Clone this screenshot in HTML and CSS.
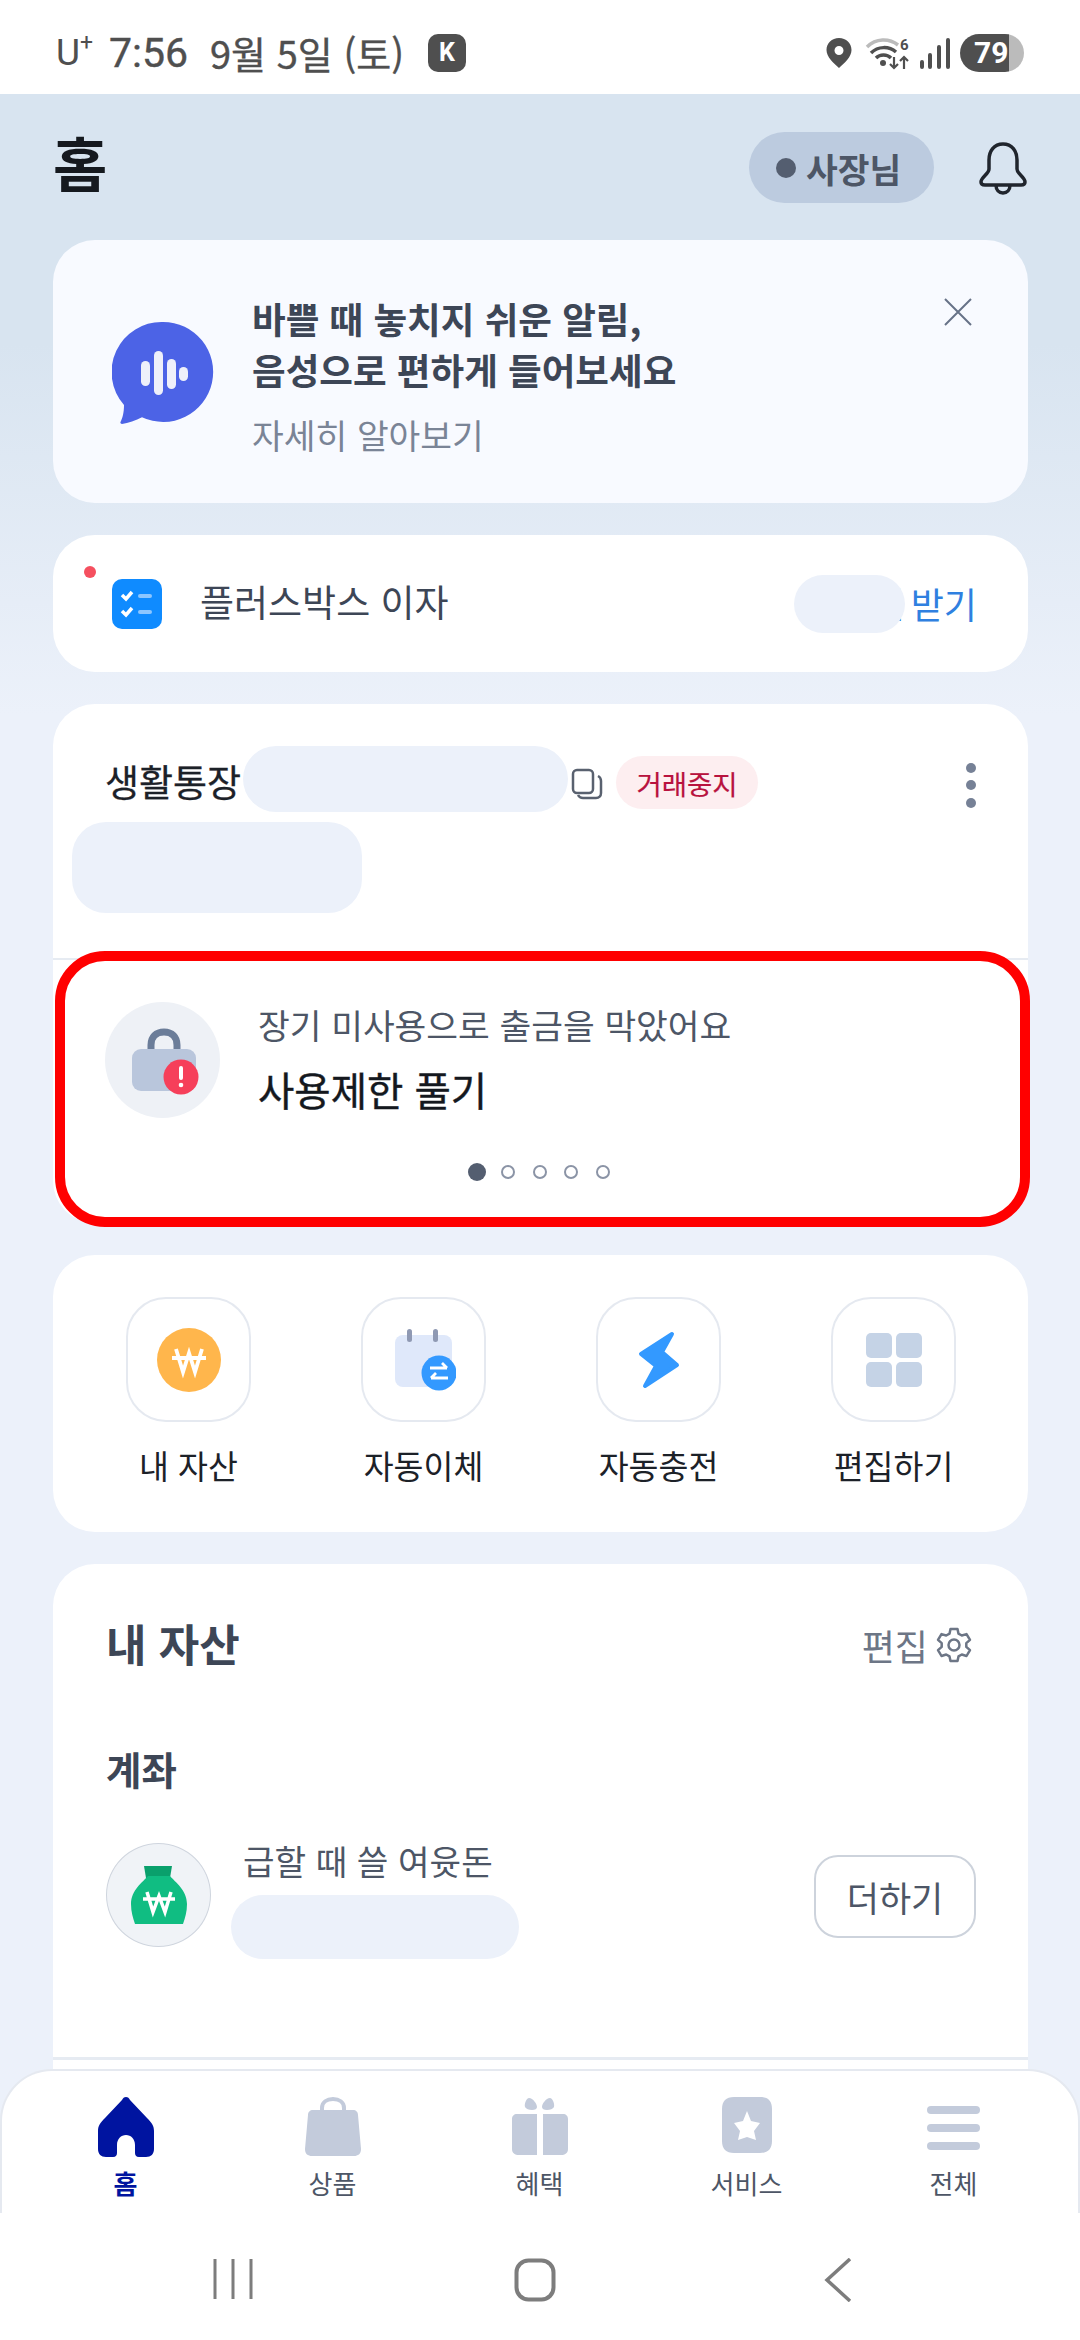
FILE: index.html
```html
<!DOCTYPE html>
<html lang="ko">
<head>
<meta charset="utf-8">
<title>홈</title>
<link rel="stylesheet" href="styles.css">
</head>
<body>
<div class="screen">
  <div class="status">
    <div class="status-left">
      <span class="carrier">U<sup>+</sup></span>
      <span class="clock">7:56</span>
      <span class="date">9월 5일 (토)</span>
      <span class="k-badge">K</span>
    </div>
    <div class="status-right">
      <svg class="i-pin" width="28" height="32" viewBox="0 0 28 32"><path fill-rule="evenodd" fill="#4f4f4f" d="M14 1C6.8 1 1.5 6.4 1.500 13c0 7 7 13 12.500 18 5.500-5 12.500-11 12.500-18C26.500 6.400 21.200 1 14 1zm0 8a4.500 4.500 0 1 1 0 9 4.500 4.500 0 0 1 0-9z"/></svg>
      <svg class="i-wifi" width="48" height="34" viewBox="0 0 48 34">
        <path d="M2 11C11 2 24 2 33 9" fill="none" stroke="#bbb" stroke-width="3.500"/>
        <path d="M6 17C13 10 24 10 31 16" fill="none" stroke="#4f4f4f" stroke-width="3.500"/>
        <path d="M11 22C15 18 22 18 26 22" fill="none" stroke="#4f4f4f" stroke-width="3.500"/>
        <circle cx="18" cy="27" r="3" fill="#4f4f4f"/>
        <path d="M29 21v11M25 28l4 4 4-4M39 33V21M35 25l4-4 4 4" fill="none" stroke="#4f4f4f" stroke-width="2.200"/>
        <text x="35" y="14" class="wifi-six">6</text>
      </svg>
      <svg class="i-signal" width="32" height="34" viewBox="0 0 32 34"><g stroke="#4f4f4f" stroke-width="4" stroke-linecap="round"><path d="M3 31v-5M11 31V19M20 31V11M29 31V4"/></g></svg>
      <span class="battery">79</span>
    </div>
  </div>

  <div class="main">
    <header class="top">
      <h1 class="page-title">홈</h1>
      <div class="top-right">
        <div class="role-chip"><span class="role-dot"></span>사장님</div>
        <svg class="i-bell" width="50" height="54" viewBox="0 0 50 54"><path d="M25 3c-9 0-14 7-14 16v9c0 5-8 8-8 13 0 2 1 3 4 3h36c3 0 4-1 4-3 0-5-8-8-8-13v-9c0-9-5-16-14-16z" fill="none" stroke="#20252d" stroke-width="3.500"/><path d="M18 44c0 5 3 8 7 8s7-3 7-8" fill="none" stroke="#20252d" stroke-width="3.500"/></svg>
      </div>
    </header>

    <section class="card banner">
      <svg class="i-bubble" width="102" height="104" viewBox="0 0 102 104">
        <path fill="#4c63e6" d="M51 1a50 50 0 1 1-21 95.300C24 99.500 16 102 10 103c-1 0-2-1-1.500-2 2-4 3.500-9 3.500-17A50 50 0 0 1 51 1z"/>
        <g fill="#eef0fa"><rect x="29" y="40" width="9" height="25" rx="4.500"/><rect x="42" y="30" width="9" height="44" rx="4.500"/><rect x="55" y="38" width="9" height="30" rx="4.500"/><rect x="67" y="46" width="9" height="14" rx="4.500"/></g>
      </svg>
      <div class="banner-text">
        <p class="banner-title">바쁠 때 놓치지 쉬운 알림,<br>음성으로 편하게 들어보세요</p>
        <p class="banner-link">자세히 알아보기</p>
      </div>
      <svg class="i-close" width="30" height="30" viewBox="0 0 30 30"><path d="M2 2l26 26M28 2L2 28" stroke="#677287" stroke-width="2" fill="none"/></svg>
    </section>

    <section class="card plus-row">
      <span class="notice-dot"></span>
      <svg class="i-check" width="50" height="50" viewBox="0 0 50 50"><rect width="50" height="50" rx="10" fill="#0f8bff"/><path d="M10 16l4 4 6-7M10 32l4 4 6-7" fill="none" stroke="#fff" stroke-width="3.500"/><rect x="26" y="15" width="14" height="4" rx="2" fill="#8cc6ff"/><rect x="26" y="31" width="14" height="4" rx="2" fill="#8cc6ff"/></svg>
      <span class="plus-label">플러스박스 이자</span>
      <span class="plus-action">원 받기</span>
      <span class="mask mask-plus"></span>
    </section>

    <section class="card account">
      <div class="account-body">
        <div class="account-line">
          <span class="account-name">생활통장</span>
          <span class="mask mask-number"></span>
          <svg class="i-copy" width="32" height="32" viewBox="0 0 32 32"><rect x="2" y="2" width="20" height="23" rx="4" fill="none" stroke="#59616f" stroke-width="2.500"/><path d="M27 8c2 1 3 3 3 5v12c0 3-2 5-5 5H12c-2 0-4-1-5-3" fill="none" stroke="#59616f" stroke-width="2.500"/></svg>
          <span class="badge">거래중지</span>
          <span class="more"><i></i><i></i><i></i></span>
        </div>
        <div class="mask mask-balance"></div>
      </div>
      <div class="notice">
        <div class="notice-main">
          <span class="lock-wrap">
            <svg width="72" height="68" viewBox="0 0 72 68"><path d="M19 24V17C19 9 24 4 32 4s13 5 13 13v7" fill="none" stroke="#6b7d99" stroke-width="7"/><rect x="0" y="21" width="64" height="42" rx="9" fill="#b9c6dc"/><circle cx="49" cy="49" r="17.500" fill="#f63f5a"/><rect x="47" y="38" width="4" height="14" rx="2" fill="#fff"/><circle cx="49" cy="57" r="2.300" fill="#fff"/></svg>
          </span>
          <div class="notice-text">
            <p class="notice-desc">장기 미사용으로 출금을 막았어요</p>
            <p class="notice-title">사용제한 풀기</p>
          </div>
        </div>
        <div class="pager"><i class="on"></i><i></i><i></i><i></i><i></i></div>
      </div>
      <div class="highlight"></div>
    </section>

    <section class="card quick">
      <div class="quick-item">
        <span class="quick-box"><svg width="64" height="64" viewBox="0 0 64 64"><circle cx="32" cy="32" r="32" fill="#ffb64c"/><path d="M19 21l7 23 6-19 6 19 7-23M15 30h34" fill="none" stroke="#fff" stroke-width="3.800"/></svg></span>
        <span class="quick-label">내 자산</span>
      </div>
      <div class="quick-item">
        <span class="quick-box"><svg width="64" height="64" viewBox="0 0 64 64"><rect x="3" y="7" width="57" height="52" rx="8" fill="#dfe8fa"/><rect x="15" y="1" width="5" height="13" rx="2.500" fill="#8f99b3"/><rect x="41" y="1" width="5" height="13" rx="2.500" fill="#8f99b3"/><circle cx="47" cy="45" r="17.500" fill="#3399ff"/><path d="M38 40h17M50 35l5 5M56 50H39M44 45l-5 5" fill="none" stroke="#fff" stroke-width="2.800"/></svg></span>
        <span class="quick-label">자동이체</span>
      </div>
      <div class="quick-item">
        <span class="quick-box"><svg width="44" height="60" viewBox="0 0 44 60"><path d="M35 4L4 24l15 12-11 20 32-21-15-13z" fill="#3399ff" stroke="#3399ff" stroke-width="4" stroke-linejoin="round"/></svg></span>
        <span class="quick-label">자동충전</span>
      </div>
      <div class="quick-item">
        <span class="quick-box"><span class="grid-icon"><i></i><i></i><i></i><i></i></span></span>
        <span class="quick-label">편집하기</span>
      </div>
    </section>

    <section class="card assets">
      <div class="assets-head">
        <h2 class="assets-title">내 자산</h2>
        <div class="assets-edit">편집
          <svg width="36" height="36" viewBox="0 0 36 36"><g fill="none" stroke="#6d7686" stroke-width="2.500" stroke-linejoin="round"><path d="M14.500 2.500h7l1 4.800 3.300 1.900 4.700-1.500 3.500 6-3.700 3.300v3.800l3.700 3.300-3.500 6-4.700-1.500-3.300 1.900-1 4.800h-7l-1-4.800-3.300-1.900-4.700 1.500-3.500-6 3.700-3.300v-3.800L2 13.700l3.500-6 4.700 1.500 3.300-1.900z" transform="translate(0 -.5) scale(1 .98)"/><circle cx="18" cy="18" r="5.500"/></g></svg>
        </div>
      </div>
      <h3 class="assets-sub">계좌</h3>
      <div class="asset-row">
        <span class="bag-wrap"><svg width="56" height="58" viewBox="0 0 56 58"><path d="M13 0h28l-2 12H15z" fill="#0aa06c"/><path d="M17 10h22C44 16 56 24 56 38c0 8-2 14-4 20H4C2 52 0 46 0 38 0 24 12 16 17 10z" fill="#10bd82"/><path d="M16 26l6 20 6-16 6 16 6-20M12 33h32" fill="none" stroke="#fff" stroke-width="3.500"/></svg></span>
        <div class="asset-info">
          <span class="asset-name">급할 때 쓸 여윳돈</span>
          <span class="mask mask-amount"></span>
        </div>
        <span class="add-btn">더하기</span>
      </div>
      <div class="asset-divider"></div>
    </section>
  </div>

  <div class="bottom">
    <nav class="tabs">
      <div class="tab active">
        <svg width="56" height="60" viewBox="0 0 56 60"><path fill="#0014a0" d="M28 0c2 0 3 1 4 3l17 18c5 5 7 8 7 13v18c0 5-3 8-8 8h-7c-3 0-4-2-4-4v-8c0-6-4-10-9-10s-9 4-9 10v8c0 2-1 4-4 4H8c-5 0-8-3-8-8V34c0-5 2-8 7-13L24 3c1-2 2-3 4-3z"/></svg>
        <span>홈</span>
      </div>
      <div class="tab">
        <svg width="56" height="60" viewBox="0 0 56 60"><path d="M17 14V11C17 5 22 2 28 2s11 3 11 9v3" fill="none" stroke="#c3cbdb" stroke-width="4"/><path fill="#c3cbdb" d="M8 13h40c3 0 5 2 5 5l3 34c0 5-3 7-7 7H7c-4 0-7-2-7-7l3-34c0-3 2-5 5-5z"/></svg>
        <span>상품</span>
      </div>
      <div class="tab">
        <svg width="56" height="60" viewBox="0 0 56 60"><g fill="#c3cbdb"><path d="M17 1c4 0 8 6 8 9 0 2-2 3-5 3s-6-1-7-3c-1-4 2-9 4-9zM38 1c-4 0-8 6-8 9 0 2 2 3 5 3s6-1 7-3c1-4-2-9-4-9z"/><path d="M5 17h20v41H7c-4 0-7-2-7-6V22c0-3 2-5 5-5zM31 17h20c3 0 5 2 5 5v30c0 4-3 6-7 6H31z"/></g></svg>
        <span>혜택</span>
      </div>
      <div class="tab">
        <svg width="50" height="56" viewBox="0 0 50 56"><path fill-rule="evenodd" fill="#c3cbdb" d="M12 0h26c8 0 12 4 12 12v32c0 8-4 12-12 12H12C4 56 0 52 0 44V12C0 4 4 0 12 0zm13 14l-4 10-9 2 6 8-2 9 9-3 9 3-2-9 6-8-9-2z"/></svg>
        <span>서비스</span>
      </div>
      <div class="tab">
        <span class="burger"><i></i><i></i><i></i></span>
        <span>전체</span>
      </div>
    </nav>
    <div class="sysnav">
      <svg width="40" height="42" viewBox="0 0 40 42"><path d="M2 1v40M20 1v40M38 1v40" stroke="#7d7d7d" stroke-width="3"/></svg>
      <svg width="42" height="44" viewBox="0 0 42 44"><rect x="2.500" y="2.500" width="37" height="39" rx="12" fill="none" stroke="#7d7d7d" stroke-width="4"/></svg>
      <svg width="28" height="44" viewBox="0 0 28 44"><path d="M26 1L3 22l23 21" fill="none" stroke="#7d7d7d" stroke-width="3.500"/></svg>
    </div>
  </div>
</div>
</body>
</html>
```

FILE: styles.css
```css
* { box-sizing: border-box; }
html, body { margin: 0; padding: 0; }
body { font-family: "Noto Sans CJK KR", "Noto Sans", sans-serif; }
p, h1, h2, h3 { margin: 0; }
i { display: block; }

.screen { position: relative; width: 1080px; height: 2340px; overflow: hidden; display: flex; flex-direction: column; background: #fff; }

/* status bar */
.status { height: 94px; flex: none; display: flex; justify-content: space-between; align-items: center; padding: 12px 56px 0 56px; color: #4f4f4f; background: #fff; }
.status-left { display: flex; align-items: center; font-family: "Roboto", "Noto Sans CJK KR", sans-serif; font-size: 37px; line-height: 40px; }
.carrier { width: 53px; font-weight: 400; }
.carrier sup { font-size: 23px; line-height: 0; vertical-align: 15px; }
.clock { width: 101px; font-weight: 400; font-size: 41px; -webkit-text-stroke: 0.4px #4f4f4f; }
.date { width: 218px; font-weight: 400; font-family: "Noto Sans CJK KR", sans-serif; font-size: 38px; white-space: nowrap; -webkit-text-stroke: 0.4px #4f4f4f; }
.k-badge { width: 38px; height: 38px; border-radius: 10px; background: #4f4f4f; color: #fff; font-size: 25px; font-weight: 700; display: flex; align-items: center; justify-content: center; }
.status-right { display: flex; align-items: center; }
.i-pin { margin-right: 12px; }
.i-wifi { margin-right: 6px; }
.i-signal { margin-right: 9px; }
.wifi-six { font: 700 15px "Roboto", sans-serif; fill: #4f4f4f; }
.battery { width: 64px; height: 38px; border-radius: 19px; background: linear-gradient(90deg, #4f4f4f 0, #4f4f4f 77%, #bbb 77%, #bbb 100%); color: #fff; font: 700 30px/38px "Roboto", sans-serif; padding-left: 14px; }

/* main */
.main { flex: 1; min-height: 0; overflow: hidden; padding: 0 52px 0 53px; display: flex; flex-direction: column; gap: 32px; background: linear-gradient(180deg, #d8e4f0 0, #d8e4f0 250px, #ecf1fa 620px, #ecf1fa 100%); }
.top { height: 115px; flex: none; margin-bottom: -1px; display: flex; justify-content: space-between; align-items: flex-start; padding-top: 38px; }
.page-title { font-size: 59px; line-height: 60px; font-weight: 700; color: #15191f; }
.top-right { display: flex; align-items: center; gap: 44px; }
.role-chip { width: 185px; height: 71px; border-radius: 36px; background: #bccbdf; display: flex; align-items: center; padding-left: 27px; gap: 10px; color: #4d5666; font-size: 34.500px; font-weight: 700; white-space: nowrap; }
.role-dot { width: 20px; height: 20px; border-radius: 50%; background: #545e70; flex: none; }

.card { background: #fff; border-radius: 42px; flex: none; position: relative; }

.banner { height: 263px; background: #f8faff; display: flex; align-items: flex-start; padding: 81px 0 0 59px; }
.banner-text { margin: -28px 0 0 38px; }
.banner-title { font-size: 36.600px; line-height: 51px; font-weight: 700; color: #3d4656; }
.banner-link { font-size: 34.500px; line-height: 46px; margin-top: 16px; color: #7a8496; }
.i-close { position: absolute; top: 57px; right: 55px; }

.plus-row { height: 137px; display: flex; align-items: center; padding: 0 51px 0 59px; }
.notice-dot { position: absolute; left: 31px; top: 31px; width: 12px; height: 12px; border-radius: 50%; background: #f5505f; }
.plus-label { font-size: 37px; color: #3d4656; margin: -5px 0 0 38px; flex: 1; }
.plus-action { font-size: 36px; color: #2f80e0; margin-top: -2px; word-spacing: -4px; }
.mask { background: #ecf1fa; display: block; flex: none; }
.mask-plus { position: absolute; left: 741px; top: 40px; width: 111px; height: 58px; border-radius: 29px; }

.account { height: 519px; }
.account-body { height: 256px; border-bottom: 2px solid #e6ebf2; padding: 42px 0 0 19px; }
.account-line { display: flex; align-items: center; height: 66px; }
.account-name { font-size: 37px; color: #1c2128; width: 171px; padding-left: 33px; flex: none; white-space: nowrap; margin-top: 4px; -webkit-text-stroke: 0.3px #1c2128; }
.mask-number { width: 325px; height: 66px; border-radius: 33px; }
.i-copy { margin: 9px 0 0 3px; flex: none; }
.badge { margin: 7px 0 0 13px; width: 142px; height: 53px; border-radius: 27px; background: #fdeef0; color: #b8123e; font-size: 27.500px; display: flex; align-items: center; justify-content: center; flex: none; -webkit-text-stroke: 0.2px #b8123e; }
.more { margin: 12px 0 0 208px; display: flex; flex-direction: column; gap: 7.500px; }
.more i { width: 10px; height: 10px; border-radius: 50%; background: #768196; }
.mask-balance { margin-top: 10px; width: 290px; height: 91px; border-radius: 34px; }

.notice { height: 263px; display: flex; flex-direction: column; padding: 0 0 0 52px; }
.notice-main { display: flex; align-items: flex-start; margin-top: 42px; }
.lock-wrap { width: 115px; height: 116px; border-radius: 50%; background: #eef1f6; display: flex; align-items: center; justify-content: center; flex: none; padding: 4px 0 0 10px; }
.notice-text { margin: -2px 0 0 38px; }
.notice-desc { font-size: 34.500px; line-height: 48px; color: #4d5666; }
.notice-title { font-size: 39.500px; line-height: 56px; color: #14181e; margin-top: 13px; -webkit-text-stroke: 0.4px #14181e; }
.pager { display: flex; align-items: center; gap: 17.600px; margin: 45px 0 0 363px; }
.pager i { width: 14px; height: 14px; border-radius: 50%; border: 2px solid #8b94a6; }
.pager i.on { width: 18px; height: 18px; background: #545e70; border: 0; margin-right: -2.600px; }
.highlight { position: absolute; left: 2px; top: 247px; width: 975px; height: 276px; border: 10px solid #ff0000; border-radius: 50px; }

.quick { height: 277px; display: grid; grid-template-columns: repeat(4, 235px); padding: 42px 17px 0 18px; }
.quick-item { display: flex; flex-direction: column; align-items: center; }
.quick-box { width: 125px; height: 125px; border: 2px solid #e5e9f0; border-radius: 40px; display: flex; align-items: center; justify-content: center; }
.quick-label { font-size: 32.500px; line-height: 46px; color: #1c2128; margin-top: 20px; white-space: nowrap; }
.grid-icon { display: grid; grid-template-columns: 26px 26px; gap: 4px; }
.grid-icon i { height: 25px; border-radius: 5px; background: #c5d3e6; }

.assets { height: 700px; padding: 0 0 0 53px; }
.assets-head { display: flex; justify-content: space-between; align-items: center; padding: 49px 56px 0 0; }
.assets-title { font-size: 44px; line-height: 60px; font-weight: 700; color: #3d4656; }
.assets-edit { display: flex; align-items: center; gap: 8px; font-size: 36px; color: #6d7686; margin-top: 3px; }
.assets-sub { font-size: 38.500px; line-height: 50px; font-weight: 700; color: #3d4656; margin-top: 70px; }
.asset-row { display: flex; align-items: flex-start; margin-top: 50px; position: relative; }
.bag-wrap { width: 105px; height: 104px; border-radius: 50%; border: 1px solid #cfd5de; background: #f0f3f7; display: flex; align-items: center; justify-content: center; flex: none; }
.asset-info { display: flex; flex-direction: column; margin-left: 20px; }
.asset-name { font-size: 34.300px; line-height: 46px; color: #4d5666; margin: -6px 0 0 12px; }
.mask-amount { width: 288px; height: 64px; border-radius: 32px; margin-top: 12px; }
.add-btn { position: absolute; right: 52px; top: 12px; width: 162px; height: 83px; border: 2px solid #cdd3dc; border-radius: 24px; font-size: 35px; color: #4d5666; display: flex; align-items: center; justify-content: center; }
.asset-divider { height: 3px; background: #e6ebf2; margin: 98px 0 0 -53px; }

/* bottom */
.bottom { position: absolute; left: 0; right: 0; bottom: 0; }
.tabs { height: 144px; background: #fff; border: 2px solid #e5e9f0; border-bottom: 0; border-radius: 52px 52px 0 0; display: grid; grid-template-columns: repeat(5, 207px); padding: 26px 0 0 20px; }
.tab { display: flex; flex-direction: column; align-items: center; color: #4d5666; font-size: 26px; line-height: 34px; height: 103px; justify-content: flex-end; }
.tab svg { margin-bottom: auto; }
.tab.active { color: #0014a0; font-weight: 700; }
.burger { display: flex; flex-direction: column; gap: 10.500px; margin: 9px 0 auto; }
.burger i { width: 53px; height: 7.500px; border-radius: 4px; background: #c3cbdb; }
.sysnav { height: 127px; background: #fff; display: flex; align-items: flex-start; padding: 45px 0 0 213px; }
.sysnav svg:nth-child(2) { margin-left: 261px; }
.sysnav svg:nth-child(3) { margin-left: 268px; }
```
